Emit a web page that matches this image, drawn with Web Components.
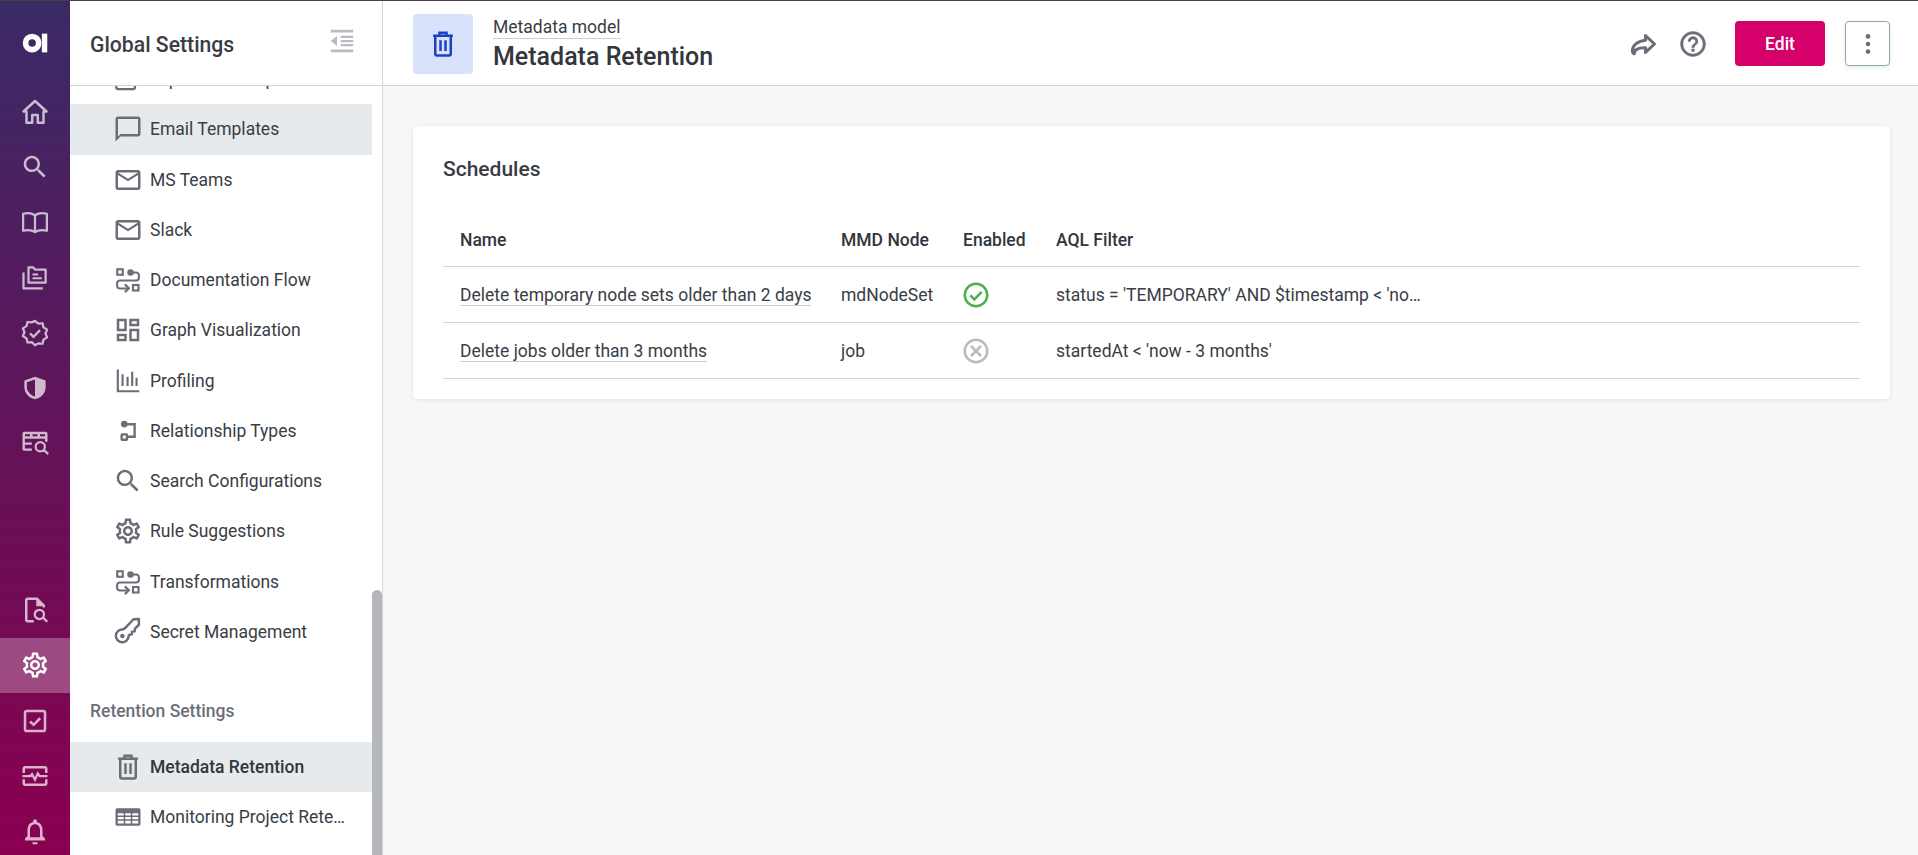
<!DOCTYPE html>
<html lang="en"><head><meta charset="utf-8"><title>Metadata Retention</title>
<style>
html,body{margin:0;height:100%;overflow:hidden}
body{font-family:Roboto,"Liberation Sans",sans-serif;color:#383b42;background:#f6f7f9}
</style></head><body>
<app-shell>
  <app-rail slot="rail"></app-rail>
  <side-nav slot="side"></side-nav>
  <div slot="main" style="display:flex;flex-direction:column;height:100%">
    <page-header></page-header>
    <schedule-card></schedule-card>
  </div>
</app-shell>
<script>
const slots=[[3.8,8.6],[9.8,14.2],[15.4,20.2]].flatMap(([a,b])=>[[8.9,10.7],[11.9,13.7],[14.9,17.2]].map(([t,u])=>`M${a} ${t}H${b}V${u}H${a}z`)).join('');
const P={
home:'<path fill="none" stroke="currentColor" stroke-width="2" stroke-linejoin="round" d="M12 3.200 2.800 11.600h2.400V20.500h4.600v-6.200h4.400v6.200h4.600v-8.900h2.400z"/>',
search:'<path d="M15.500 14h-.79l-.28-.27C15.410 12.590 16 11.110 16 9.500 16 5.910 13.090 3 9.500 3S3 5.910 3 9.500 5.910 16 9.500 16c1.610 0 3.090-.59 4.230-1.570l.27.28v.79l5 4.990L20.490 19l-4.990-5zm-6 0C7.010 14 5 11.990 5 9.500S7.010 5 9.500 5 14 7.010 14 9.500 11.990 14 9.500 14z"/>',
book:'<path fill="none" stroke="currentColor" stroke-width="1.800" stroke-linejoin="round" d="M2.500 5.400c3.600-1 7-.6 9.500 1.200 2.500-1.800 5.900-2.200 9.500-1.200V19c-3.600-1-7-.6-9.500 1-2.500-1.600-5.900-2-9.500-1zM12 6.600V20"/>',
library:'<path fill="none" stroke="currentColor" stroke-width="1.800" stroke-linejoin="round" d="M6.800 3.500h3.600l1.800 1.800h8.300v10.400H6.800zM2.800 7.500v12.800h15.400"/><path fill="none" stroke="currentColor" stroke-width="1.600" d="M10 9.200h4.500M10 12.200h7.500"/>',
verified:'<path fill="none" stroke="currentColor" stroke-width="1.800" stroke-linejoin="round" d="M12 2.500l2.600 2.200 3.400-.3.800 3.300 2.900 1.800-1.300 3.100 1.300 3.100-2.900 1.800-.8 3.300-3.400-.3L12 22l-2.600-2.500-3.400.3-.8-3.300-2.900-1.800 1.300-3.100-1.300-3.100 2.900-1.800.8-3.300 3.400.3z" transform="translate(0 -.2)"/><path fill="none" stroke="currentColor" stroke-width="1.800" d="M8 12.300l2.800 2.800 5.200-5.400"/>',
shield:'<path d="M12 3 3.500 6v5.400c0 4.600 3.600 8.600 8.500 9.600 4.900-1 8.500-5 8.500-9.600V6zm-6.500 8.400V7.400L12 5.100v13.700c-3.800-1-6.500-4.300-6.500-7.400z"/>',
tablesearch:'<path d="M2 4.500c0-.8.700-1.500 1.500-1.500h17c.8 0 1.500.7 1.500 1.500V11h-2V8.500H3.900v3h5.600v1.900H3.900v2.900h5.600v1.900H3.500c-.800 0-1.500-.7-1.500-1.500zM4 5v1.500h4V5zm6 0v1.500h4V5zm6 0v1.500h4V5z"/><path fill="none" stroke="currentColor" stroke-width="1.800" d="M16.200 11.300a3.700 3.700 0 1 0 0 7.400 3.700 3.700 0 0 0 0-7.400zM19 17.400l3.500 3.500"/>',
docsearch:'<path d="M6 2h8l6 6v2h-2V9h-5V4H6v16h5v2H6c-1.100 0-2-.9-2-2V4c0-1.100.9-2 2-2z"/><path fill="none" stroke="currentColor" stroke-width="1.800" d="M15.500 11.800a3.700 3.700 0 1 0 0 7.400 3.700 3.700 0 0 0 0-7.400zM18.300 17.900l3.500 3.500"/>',
gear:'<path d="M19.430 12.980c.04-.32.07-.64.07-.98 0-.34-.03-.66-.07-.98l2.110-1.650c.19-.15.24-.42.12-.64l-2-3.460c-.09-.16-.26-.25-.44-.25-.06 0-.12.01-.17.03l-2.490 1c-.52-.4-1.080-.73-1.690-.98l-.38-2.650C14.460 2.180 14.250 2 14 2h-4c-.25 0-.46.18-.49.42l-.38 2.650c-.61.25-1.170.59-1.690.98l-2.490-1c-.06-.02-.12-.03-.18-.03-.17 0-.34.09-.43.25l-2 3.460c-.13.22-.07.49.12.64l2.110 1.650c-.04.32-.07.65-.07.98 0 .33.03.66.07.98l-2.110 1.650c-.19.15-.24.42-.12.64l2 3.460c.09.16.26.25.44.25.06 0 .12-.01.17-.03l2.490-1c.52.4 1.080.73 1.690.98l.38 2.650c.03.24.24.42.49.42h4c.25 0 .46-.18.49-.42l.38-2.650c.61-.25 1.170-.59 1.690-.98l2.490 1c.06.02.12.03.18.03.17 0 .34-.09.43-.25l2-3.460c.12-.22.07-.49-.12-.64l-2.110-1.650zm-1.980-1.710c.04.31.05.52.05.73 0 .21-.02.43-.05.73l-.14 1.130.89.7 1.080.84-.7 1.210-1.270-.51-1.040-.42-.9.68c-.43.32-.84.56-1.250.73l-1.060.43-.16 1.130-.2 1.350h-1.400l-.19-1.350-.16-1.130-1.060-.43c-.43-.18-.83-.41-1.230-.71l-.91-.7-1.060.43-1.270.51-.7-1.210 1.080-.84.89-.7-.14-1.130c-.03-.31-.05-.54-.05-.74s.02-.43.05-.73l.14-1.130-.89-.7-1.080-.84.7-1.210 1.270.51 1.040.42.9-.68c.43-.32.84-.56 1.250-.73l1.060-.43.16-1.130.2-1.350h1.390l.19 1.350.16 1.130 1.060.43c.43.18.83.41 1.230.71l.91.7 1.060-.43 1.270-.51.7 1.210-1.070.85-.89.7.14 1.130zM12 8c-2.210 0-4 1.790-4 4s1.790 4 4 4 4-1.790 4-4-1.790-4-4-4zm0 6c-1.100 0-2-.9-2-2s.9-2 2-2 2 .9 2 2-.9 2-2 2z"/>',
checkbox:'<rect x="4" y="4" width="16" height="16" rx="1.500" fill="none" stroke="currentColor" stroke-width="2"/><path fill="none" stroke="currentColor" stroke-width="2" d="M8 12.400l2.900 2.700 5.200-5.300"/>',
box:'<rect x="2.600" y="3" width="15" height="17" rx="1.500" fill="none" stroke="currentColor" stroke-width="1.800"/>',
monitor:'<path d="M2 6c0-1.100.9-2 2-2h16c1.100 0 2 .9 2 2v3.500h-2V6H4v3.500H2zM2 14.500h2V18h16v-3.500h2V18c0 1.100-.9 2-2 2H4c-1.100 0-2-.9-2-2z"/><path fill="none" stroke="currentColor" stroke-width="1.800" d="M2 12h6l1.600-1.500L12 15l2.200-5 1.500 2H22"/>',
bell:'<path d="M10 21h4v1.500h-4zM18 16v-5c0-3.100-1.600-5.600-4.500-6.300V4c0-.8-.7-1.500-1.500-1.500S10.500 3.200 10.500 4v.7C7.600 5.400 6 7.900 6 11v5l-2 2v1.500h16V18zm-2 1H8v-6c0-2.500 1.500-4.500 4-4.500s4 2 4 4.500z"/>',
chat:'<path d="M20 2H4c-1.100 0-2 .9-2 2v18l4-4h14c1.100 0 2-.9 2-2V4c0-1.100-.9-2-2-2zm0 14H6l-2 2V4h16v12z"/>',
mail:'<path d="M20 4H4c-1.100 0-1.990.9-1.990 2L2 18c0 1.100.9 2 2 2h16c1.100 0 2-.9 2-2V6c0-1.100-.9-2-2-2zm0 14H4V8l8 5 8-5v10zm-8-7L4 6h16l-8 5z"/>',
flow:'<g fill="none" stroke="currentColor" stroke-width="1.700"><rect x="3.400" y="3.400" width="4.400" height="4.400"/><rect x="16" y="16" width="4.400" height="4.400"/><path d="M14 6h4.500a2.200 2.200 0 0 1 2.200 2.200v2a2.200 2.200 0 0 1-2.200 2.200H5.500a2.200 2.200 0 0 0-2.200 2.200v2a2.200 2.200 0 0 0 2.200 2.200H12"/><path d="M9.500 15.500l3.200 3.100-3.200 3.100"/></g><circle cx="14" cy="6" r="2.600"/>',
dash:'<path d="M19 5v2h-4V5h4M9 5v6H5V5h4m10 8v6h-4v-6h4M9 17v2H5v-2h4M21 3h-8v6h8V3zM11 3H3v10h8V3zm10 8h-8v10h8V11zm-10 4H3v6h8v-6z"/>',
bars:'<path d="M3 2.800h1.700v16.500H21V21H3zM6.800 6.600h1.700V16H6.800zM10.800 8.500h1.700V16h-1.700zM14.500 4.500h1.700V16h-1.700zM18 9.300h1.700V16H18z"/>',
rel:'<g fill="none" stroke="currentColor" stroke-width="1.900"><path d="M9 6.600h8.300v10H11.500"/><rect x="6.900" y="14.700" width="4.300" height="4.300" rx=".5"/></g><circle cx="9" cy="6.400" r="2.700"/>',
key:'<g transform="translate(0 -1.800)"><path fill="none" stroke="currentColor" stroke-width="2" stroke-linejoin="round" d="M7.700 11.800a5.100 5.100 0 1 0 4.800 5.300l.3-.9 2.200-.5.200-2.100 2.100-.3.300-2.200 3.100-3.100V3.400l-4.300.2-6.900 7.300a6 6 0 0 0-1.800.9z"/><circle cx="7.500" cy="17" r="1.800"/></g>',
trash:'<path fill="none" stroke="currentColor" stroke-width="2" d="M5.800 5.500v14.200c0 .8.700 1.400 1.400 1.400h9.600c.7 0 1.400-.6 1.400-1.400V5.500M4.100 5.300h15.800M9.200 5V3h5.600v2M10 9v8.500M14 9v8.500"/>',
grid:'<path fill-rule="evenodd" d="M3.500 5h17c.8 0 1.500.7 1.500 1.500v11c0 .8-.7 1.500-1.500 1.500h-17C2.700 19 2 18.300 2 17.500v-11C2 5.700 2.700 5 3.500 5z'+slots+'"/>',
collapse:'<path d="M3 3h18v2.200H3zM11 7.800h10v1.800H11zM11 11.100h10v1.800H11zM11 14.400h10v1.800H11zM3 18.800h18V21H3zM8 8v8l-5-4z"/>',
share:'<path fill="none" stroke="currentColor" stroke-width="2.400" stroke-linejoin="round" d="M14 5.300v3.700c-6 .4-10.500 4.200-10.500 8.300 0 1.300.5 2.100 1.500 2.500-.2-3.300 3.500-5.100 9-4.800v3.700l7.200-6.700z"/>',
help:'<path stroke="currentColor" stroke-width=".35" d="M11 18h2v-2h-2v2zm1-16C6.480 2 2 6.480 2 12s4.480 10 10 10 10-4.480 10-10S17.520 2 12 2zm0 18c-4.410 0-8-3.590-8-8s3.590-8 8-8 8 3.590 8 8-3.590 8-8 8zm0-14c-2.210 0-4 1.790-4 4h2c0-1.100.9-2 2-2s2 .9 2 2c0 2-3 1.750-3 5h2c0-2.250 3-2.500 3-5 0-2.210-1.790-4-4-4z"/>',
dots:'<circle cx="12" cy="5.500" r="2"/><circle cx="12" cy="12" r="2"/><circle cx="12" cy="18.500" r="2"/>',
ok:'<circle cx="12" cy="12" r="9" fill="none" stroke="currentColor" stroke-width="2"/><path fill="none" stroke="currentColor" stroke-width="2" d="M7.500 12.300l3.200 3.200 5.800-6"/>',
no:'<circle cx="12" cy="12" r="9" fill="none" stroke="currentColor" stroke-width="2"/><path fill="none" stroke="currentColor" stroke-width="2" d="M8 8l8 8M16 8l-8 8"/>',
logo:'<path fill-rule="evenodd" d="M9.700 4.500a7.500 7.500 0 1 1 0 15 7.500 7.500 0 0 1 0-15zm0 4.500a3 3 0 1 0 0 6 3 3 0 0 0 0-6z"/><rect x="17.500" y="4.500" width="4.300" height="15"/>'
};
class XIcon extends HTMLElement{
  connectedCallback(){
    if(this.shadowRoot)return;
    const s=this.getAttribute('size')||30;
    this.attachShadow({mode:'open'}).innerHTML=`<style>:host{display:inline-flex;flex:none;width:${s}px;height:${s}px}svg{width:100%;height:100%;fill:currentColor;display:block}</style><svg viewBox="0 0 24 24" aria-hidden="true">${P[this.getAttribute('name')]||''}</svg>`;
  }
}
customElements.define('x-icon',XIcon);

class AppShell extends HTMLElement{
  constructor(){super();this.attachShadow({mode:'open'}).innerHTML=`<style>
  :host{display:grid;grid-template-columns:70px 313px 1fr;height:855px;box-sizing:border-box;border-top:1px solid #444;overflow:hidden}
  ::slotted(*){min-width:0;min-height:0}
  </style><slot name="rail"></slot><slot name="side"></slot><slot name="main"></slot>`;}
}
customElements.define('app-shell',AppShell);

class RailItem extends HTMLElement{
  constructor(){super();this.attachShadow({mode:'open'}).innerHTML=`<style>
  :host{display:flex;align-items:center;justify-content:center;height:55.3px;color:rgba(255,255,255,.7)}
  :host([active]){color:#fff;background:rgba(255,255,255,.27)}
  </style><slot></slot>`;}
}
customElements.define('rail-item',RailItem);

class AppRail extends HTMLElement{
  constructor(){super();
    const item=(n,a)=>`<rail-item ${a?'active':''}><x-icon name="${n}"></x-icon></rail-item>`;
    this.attachShadow({mode:'open'}).innerHTML=`<style>
    :host{display:flex;flex-direction:column;height:854px;overflow:hidden;background:linear-gradient(180deg,#392a66 0%,#6a0f57 60%,#8a0050 100%)}
    .logo{height:83px;display:flex;align-items:center;justify-content:center;color:#fff;flex:none}
    .sp{flex:1}
    .bot{margin-bottom:-4px}
    </style><div class="logo"><x-icon name="logo"></x-icon></div>
    <div>${['home','search','book','library','verified','shield','tablesearch'].map(n=>item(n)).join('')}</div>
    <div class="sp"></div>
    <div class="bot">${item('docsearch')}${item('gear',1)}${item('checkbox')}${item('monitor')}${item('bell')}</div>`;}
}
customElements.define('app-rail',AppRail);

class NavItem extends HTMLElement{
  constructor(){super();this.attachShadow({mode:'open'});}
  connectedCallback(){
    this.shadowRoot.innerHTML=`<style>
    :host{display:flex;align-items:center;height:50.25px;width:302px;box-sizing:border-box;padding:0 27px 0 42.5px;gap:7.5px;font-size:17.5px;color:#3a3d45}
    :host([hover]){background:#e6eaec}
    :host([selected]){background:#e6eaec;font-weight:500;color:#33363c}
    x-icon{color:#6b6e78}
    span{white-space:nowrap;overflow:hidden;text-overflow:ellipsis}
    </style><x-icon name="${this.getAttribute('icon')}"></x-icon><span><slot></slot></span>`;
  }
}
customElements.define('nav-item',NavItem);

class SideNav extends HTMLElement{
  constructor(){super();this.attachShadow({mode:'open'}).innerHTML=`<style>
  :host{display:flex;flex-direction:column;position:relative;height:854px;background:#fff;border-right:1px solid #cdd5de;box-sizing:border-box;overflow:hidden}
  header{flex:none;height:85px;box-sizing:border-box;border-bottom:1px solid #cdd5de;display:flex;align-items:center;justify-content:space-between;padding:2px 25px 0 20px;font-size:21.2px;font-weight:500;color:#3a3d45}
  header x-icon{color:#b9bbc1;margin-top:-6px}
  .list{flex:1;overflow:hidden}
  .inner{margin-top:-32px}
  .sec{display:flex;align-items:center;height:50px;margin-top:28.5px;margin-bottom:6px;padding-left:20px;font-size:17.5px;font-weight:500;color:#6b6f78}
  .bar{position:absolute;left:302px;right:0;top:589px;bottom:-20px;background:#b5b7bb;border-radius:5px}
  </style>
  <header><span>Global Settings</span><x-icon name="collapse"></x-icon></header>
  <div class="list"><div class="inner">
    <nav-item icon="box">Export Data Import</nav-item>
    <nav-item icon="chat" hover>Email Templates</nav-item>
    <nav-item icon="mail">MS Teams</nav-item>
    <nav-item icon="mail">Slack</nav-item>
    <nav-item icon="flow">Documentation Flow</nav-item>
    <nav-item icon="dash">Graph Visualization</nav-item>
    <nav-item icon="bars">Profiling</nav-item>
    <nav-item icon="rel">Relationship Types</nav-item>
    <nav-item icon="search">Search Configurations</nav-item>
    <nav-item icon="gear">Rule Suggestions</nav-item>
    <nav-item icon="flow">Transformations</nav-item>
    <nav-item icon="key">Secret Management</nav-item>
    <div class="sec">Retention Settings</div>
    <nav-item icon="trash" selected>Metadata Retention</nav-item>
    <nav-item icon="grid">Monitoring Project Retention</nav-item>
  </div></div>
  <div class="bar"></div>`;}
}
customElements.define('side-nav',SideNav);

class PageHeader extends HTMLElement{
  constructor(){super();this.attachShadow({mode:'open'}).innerHTML=`<style>
  :host{display:flex;flex:none;align-items:center;height:85px;box-sizing:border-box;background:#fff;border-bottom:1px solid #cdd5de;padding:1px 28px 0 30px}
  .tile{width:60px;height:60px;border-radius:4px;background:#d8e2fb;color:#1c3fc4;display:flex;align-items:center;justify-content:center;flex:none;margin-right:20px}
  .txt{flex:1;display:flex;flex-direction:column;align-items:flex-start;margin-top:1px}
  .sub{font-size:17.5px;line-height:22px;color:#3a3d45;border-bottom:1px solid #ccced2;margin-bottom:2px}
  .title{font-size:25px;font-weight:500;line-height:32px;color:#33363c}
  .act{color:#6b6e78;display:flex}
  .share{margin-right:20px}
  .help{margin-right:27.5px}
  .edit{width:90px;height:45px;border-radius:4px;background:#d5006a;color:#fff;font-size:17.5px;font-weight:500;display:flex;align-items:center;justify-content:center;margin-right:20px;flex:none}
  .more{width:45px;height:45px;box-sizing:border-box;border:1px solid #8fa5b0;border-radius:4px;display:flex;align-items:center;justify-content:center;box-shadow:0 2px 4px rgba(60,90,110,.12);color:#6b6e78;flex:none}
  </style>
  <div class="tile"><x-icon name="trash"></x-icon></div>
  <div class="txt"><div class="sub">Metadata model</div><div class="title">Metadata Retention</div></div>
  <div class="act share"><x-icon name="share"></x-icon></div>
  <div class="act help"><x-icon name="help"></x-icon></div>
  <div class="edit">Edit</div>
  <div class="more"><x-icon name="dots" size="28"></x-icon></div>`;}
}
customElements.define('page-header',PageHeader);

class ScheduleRow extends HTMLElement{
  constructor(){super();this.attachShadow({mode:'open'}).innerHTML=`<style>
  :host{display:grid;grid-template-columns:381px 122px 93px 1fr;height:56px;box-sizing:border-box;border-bottom:1px solid #cdd5de;align-items:center;font-size:17.5px;color:#3a3d45}
  :host([head]){height:54px;font-weight:500;color:#33363c}
  ::slotted(*){padding-left:17px;min-width:0}
  </style><slot></slot>`;}
}
customElements.define('schedule-row',ScheduleRow);

class ScheduleCard extends HTMLElement{
  constructor(){super();this.attachShadow({mode:'open'}).innerHTML=`<style>
  :host{display:block;margin:40px 28px 0 30px;background:#fff;border-radius:4px;box-shadow:0 1px 4px rgba(40,50,70,.1);padding:26px 30px 20px}
  h2{margin:0;font-size:21px;font-weight:500;line-height:34px;color:#383b42}
  .tbl{margin-top:27px}
  a{color:inherit;text-decoration:none;border-bottom:1px solid #ccced2}
  .flt{display:block;max-width:365px;white-space:nowrap;overflow:hidden;text-overflow:ellipsis}
  .f{padding-left:17px}
  x-icon{display:flex;margin-left:-2.5px}
  .yes{color:#4caf50}.nope{color:#b9bac0}
  </style>
  <h2>Schedules</h2>
  <div class="tbl">
    <schedule-row head><div>Name</div><div>MMD Node</div><div>Enabled</div><div>AQL Filter</div></schedule-row>
    <schedule-row><div><a>Delete temporary node sets older than 2 days</a></div><div>mdNodeSet</div><div class="yes"><x-icon name="ok"></x-icon></div><div class="f"><span class="flt">status = 'TEMPORARY' AND $timestamp &lt; 'now - 2 days'</span></div></schedule-row>
    <schedule-row><div><a>Delete jobs older than 3 months</a></div><div>job</div><div class="nope"><x-icon name="no"></x-icon></div><div class="f"><span class="flt">startedAt &lt; 'now - 3 months'</span></div></schedule-row>
  </div>`;}
}
customElements.define('schedule-card',ScheduleCard);
</script>
</body></html>
